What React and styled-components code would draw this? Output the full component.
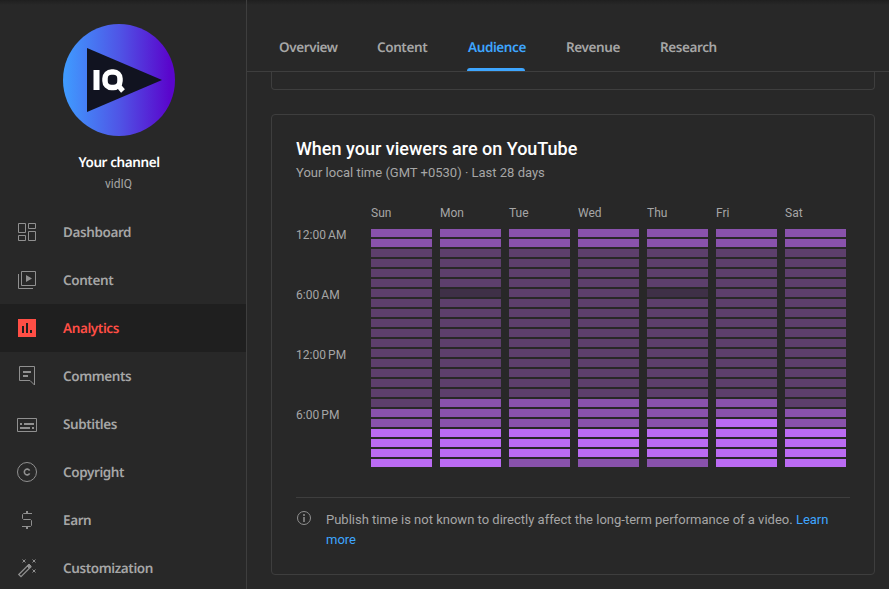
import React from 'react';
import styled, {createGlobalStyle, css} from 'styled-components';

const colors = {
    background: '#282828',
    active: '#1f1f1f',
    border: '#3e3e3e',
    grey: '#a6a6a6',
    icon: '#909090',
    white: '#ffffff',
    red: '#ff4e45',
    blue: '#3ea6ff'
};

const levels = ['#3f3047', '#5d3f6c', '#8952ac', '#bb6bf3'];

const fontBrand = css`
    font-family: 'Noto Sans', 'Open Sans', sans-serif;
    font-weight: 600;
    font-size: 13.5px;
    letter-spacing: -0.4px;
    text-rendering: geometricPrecision;
`;

const GlobalStyle = createGlobalStyle`
    * {
        box-sizing: border-box;
    }

    body {
        margin: 0;
        overflow: hidden;
        background: ${colors.background};
        color: ${colors.grey};
        font-family: Roboto, 'Liberation Sans', sans-serif;
    }
`;

const Page = styled.div`
    display: flex;
    height: 589px;
    overflow: hidden;
    background: linear-gradient(#1f1f1f, ${colors.background} 5px);
`;

const Sidebar = styled.aside`
    flex: none;
    width: 247px;
    border-right: 1px solid ${colors.border};
`;

const Channel = styled.div`
    display: flex;
    flex-direction: column;
    align-items: center;
    width: 238px;
    height: 208px;
    padding-top: 24px;
`;

const Avatar = styled.svg`
    display: block;
    flex: none;
    width: 112px;
    height: 112px;
`;

const ChannelTitle = styled.div`
    ${fontBrand};
    margin-top: 16px;
    line-height: 20px;
    color: ${colors.white};
`;

const ChannelName = styled.div`
    margin-top: 3px;
    padding-right: 1px;
    font-size: 12px;
    line-height: 18px;
`;

const MenuItem = styled.a`
    display: flex;
    align-items: center;
    height: 48px;
    padding-left: 15px;
    color: ${({$active}) => $active ? colors.red : colors.icon};
    background: ${({$active}) => $active ? colors.active : 'transparent'};
`;

const MenuIcon = styled.svg`
    flex: none;
    width: 24px;
    height: 24px;
    margin-right: 24px;
    fill: none;
    stroke: currentColor;
`;

const MenuLabel = styled.span`
    ${fontBrand};
    color: ${({$active}) => $active ? colors.red : colors.grey};
`;

const Main = styled.main`
    flex: 1;
    min-width: 0;
`;

const Tabs = styled.nav`
    display: flex;
    height: 72px;
    padding-left: 32px;
    border-bottom: 1px solid ${colors.border};
`;

const Tab = styled.a`
    ${fontBrand};
    display: flex;
    flex-direction: column;
    justify-content: space-between;
    width: ${({$width}) => $width}px;
    margin-right: 40px;
    padding-top: 37px;
    line-height: 20px;
    white-space: nowrap;
    color: ${({$active}) => $active ? colors.blue : colors.grey};
`;

const Indicator = styled.span`
    width: 58px;
    height: 3px;
    margin-left: -1px;
    border-radius: 3px 3px 0 0;
    background: ${colors.blue};
`;

const Card = styled.section`
    width: 604px;
    height: 461px;
    margin: 24px 0 0 24px;
    padding: 24px 24px 0;
    border: 1px solid ${colors.border};
    border-radius: 4px;
`;

const PreviousCard = styled(Card)`
    height: 18px;
    margin-top: 0;
    padding: 0;
    border-top: 0;
    border-radius: 0 0 4px 4px;
`;

const Title = styled.h2`
    margin: -2px 0 0;
    font-size: 18px;
    font-weight: 500;
    line-height: 24px;
    color: ${colors.white};
`;

const Subtitle = styled.div`
    margin-top: 2px;
    font-size: 13px;
    line-height: 20px;
`;

const Heatmap = styled.div`
    display: flex;
    margin-top: 22px;
    font-size: 12px;
`;

const Hours = styled.div`
    width: 75px;
    padding-top: 20px;
`;

const Hour = styled.div`
    height: 60px;
    line-height: 20px;
    word-spacing: -0.8px;
`;

const Days = styled.div`
    display: flex;
    gap: 8px;
`;

const Day = styled.div`
    display: flex;
    flex-direction: column;
    gap: 2px;
    width: 61px;
`;

const DayLabel = styled.div`
    height: 22px;
    line-height: 16px;
`;

const Cell = styled.div`
    height: 8px;
    background: ${({$level}) => levels[$level]};
`;

const Note = styled.div`
    display: flex;
    margin-top: 30px;
    padding-top: 12px;
    border-top: 1px solid ${colors.border};
    font-size: 13px;
    line-height: 20px;
`;

const NoteIcon = styled.svg`
    flex: none;
    width: 16px;
    height: 16px;
    margin-right: 14px;
    fill: none;
    stroke: ${colors.icon};
`;

const NoteLink = styled.a`
    color: ${colors.blue};
`;

const menu = [
    {
        label: 'Dashboard',
        icon: (
            <path d="M3.5 3.5h7v9h-7zM13.5 3.5h7v5h-7zM3.5 15.5h7v5h-7zM13.5 11.5h7v9h-7z" />
        )
    },
    {
        label: 'Content',
        icon: (
            <>
                <path d="M6.5 3.5h14v14h-14zM3.5 6v14.5H18" />
                <path d="M11 7v7l6-3.5z" fill="currentColor" stroke="none" />
            </>
        )
    },
    {
        label: 'Analytics',
        active: true,
        icon: (
            <path
                d="M3 3v18h18V3zM7 10h2v7H7zM11 7h2v10h-2zM15 14h2v3h-2z"
                fill="currentColor"
                fillRule="evenodd"
                stroke="none" />
        )
    },
    {
        label: 'Comments',
        icon: (
            <>
                <path d="M4.5 2.5h15V21l-4.5-4.5H4.5z" />
                <path d="M8 8h8M8 12h5" strokeWidth="2" />
            </>
        )
    },
    {
        label: 'Subtitles',
        icon: (
            <>
                <path d="M2.5 6.5h19v13h-19z" />
                <path d="M5 12h2M9 12h10M5 16h10M17 16h2" strokeWidth="2" />
            </>
        )
    },
    {
        label: 'Copyright',
        icon: (
            <>
                <circle cx="12" cy="12" r="9.5" />
                <path d="M14.6 10.6a2.8 2.9 0 1 0 0 2.8" strokeWidth="1.6" />
            </>
        )
    },
    {
        label: 'Earn',
        icon: (
            <>
                <path d="M17 5.5H8.5l-1 1v4l1 1h7l1 1v5l-1 1H7" />
                <path d="M12 3v2M12 19v2" strokeWidth="2" />
            </>
        )
    },
    {
        label: 'Customization',
        icon: (
            <>
                <path d="M3.8 18.5L13.5 8.8l2.2 2.2L6 20.7z" strokeWidth="1.3" />
                <path d="M12 10l2-2 2.2 2.2-2 2z" fill="currentColor" />
                <path d="M7.5 3.5l3 3M10.5 3.500l-3 3M17.5 3.5l3 3M20.5 3.5l-3 3M17.5 13.5l3 3M20.5 13.5l-3 3" />
            </>
        )
    }
];

const tabs = [
    {label: 'Overview', width: 58},
    {label: 'Content', width: 51},
    {label: 'Audience', width: 58},
    {label: 'Revenue', width: 54},
    {label: 'Research', width: 58}
];

const activeTab = 'Audience';

// one digit per hour, starting at midnight
const days = [
    {label: 'Sun', hours: '221111111111111111223333'},
    {label: 'Mon', hours: '221111011111111112223333'},
    {label: 'Tue', hours: '221111111111111112223332'},
    {label: 'Wed', hours: '221111111111111112223332'},
    {label: 'Thu', hours: '221111011111111112223332'},
    {label: 'Fri', hours: '221111111111111112233333'},
    {label: 'Sat', hours: '221111111111111111223333'}
];

const ChannelAvatar = () => (
    <Avatar viewBox="0 0 112 112">
        <defs>
            <linearGradient id="avatar">
                <stop offset="0" stopColor="#3f9cff" />
                <stop offset="0.5" stopColor="#4f55e6" />
                <stop offset="0.95" stopColor="#5a06cc" />
            </linearGradient>
        </defs>
        <circle cx="56" cy="56" r="56" fill="url(#avatar)" />
        <path d="M24 24l75 32-75 32z" fill="#111320" />
        <path d="M33.5 46v20" stroke="#fff" strokeWidth="6" />
        <rect x="42" y="48" width="15" height="15.5" rx="6.5" fill="none" stroke="#fff" strokeWidth="5.5" />
        <path d="M54 60l6 7" stroke="#fff" strokeWidth="5" />
    </Avatar>
);

const App = () => (
    <Page>
        <GlobalStyle />
        <Sidebar>
            <Channel>
                <ChannelAvatar />
                <ChannelTitle>Your channel</ChannelTitle>
                <ChannelName>vidIQ</ChannelName>
            </Channel>
            {menu.map(({label, icon, active}) => (
                <MenuItem key={label} $active={active}>
                    <MenuIcon viewBox="0 0 24 24">{icon}</MenuIcon>
                    <MenuLabel $active={active}>{label}</MenuLabel>
                </MenuItem>
            ))}
        </Sidebar>
        <Main>
            <Tabs>
                {tabs.map(({label, width}) => (
                    <Tab key={label} $width={width} $active={label === activeTab}>
                        {label}
                        {label === activeTab && <Indicator />}
                    </Tab>
                ))}
            </Tabs>
            <PreviousCard />
            <Card>
                <Title>When your viewers are on YouTube</Title>
                <Subtitle>Your local time (GMT +0530) · Last 28 days</Subtitle>
                <Heatmap>
                    <Hours>
                        <Hour>12:00 AM</Hour>
                        <Hour>6:00 AM</Hour>
                        <Hour>12:00 PM</Hour>
                        <Hour>6:00 PM</Hour>
                    </Hours>
                    <Days>
                        {days.map(({label, hours}) => (
                            <Day key={label}>
                                <DayLabel>{label}</DayLabel>
                                {hours.split('').map((level, hour) => (
                                    <Cell key={hour} $level={level} />
                                ))}
                            </Day>
                        ))}
                    </Days>
                </Heatmap>
                <Note>
                    <NoteIcon viewBox="0 0 16 16">
                        <circle cx="8" cy="8" r="6.5" />
                        <path d="M8 7v5M8 4v2" strokeWidth="1.5" />
                    </NoteIcon>
                    <div>
                        Publish time is not known to directly affect the long-term performance of a video.{' '}
                        <NoteLink>Learn more</NoteLink>
                    </div>
                </Note>
            </Card>
        </Main>
    </Page>
);

export default App;
